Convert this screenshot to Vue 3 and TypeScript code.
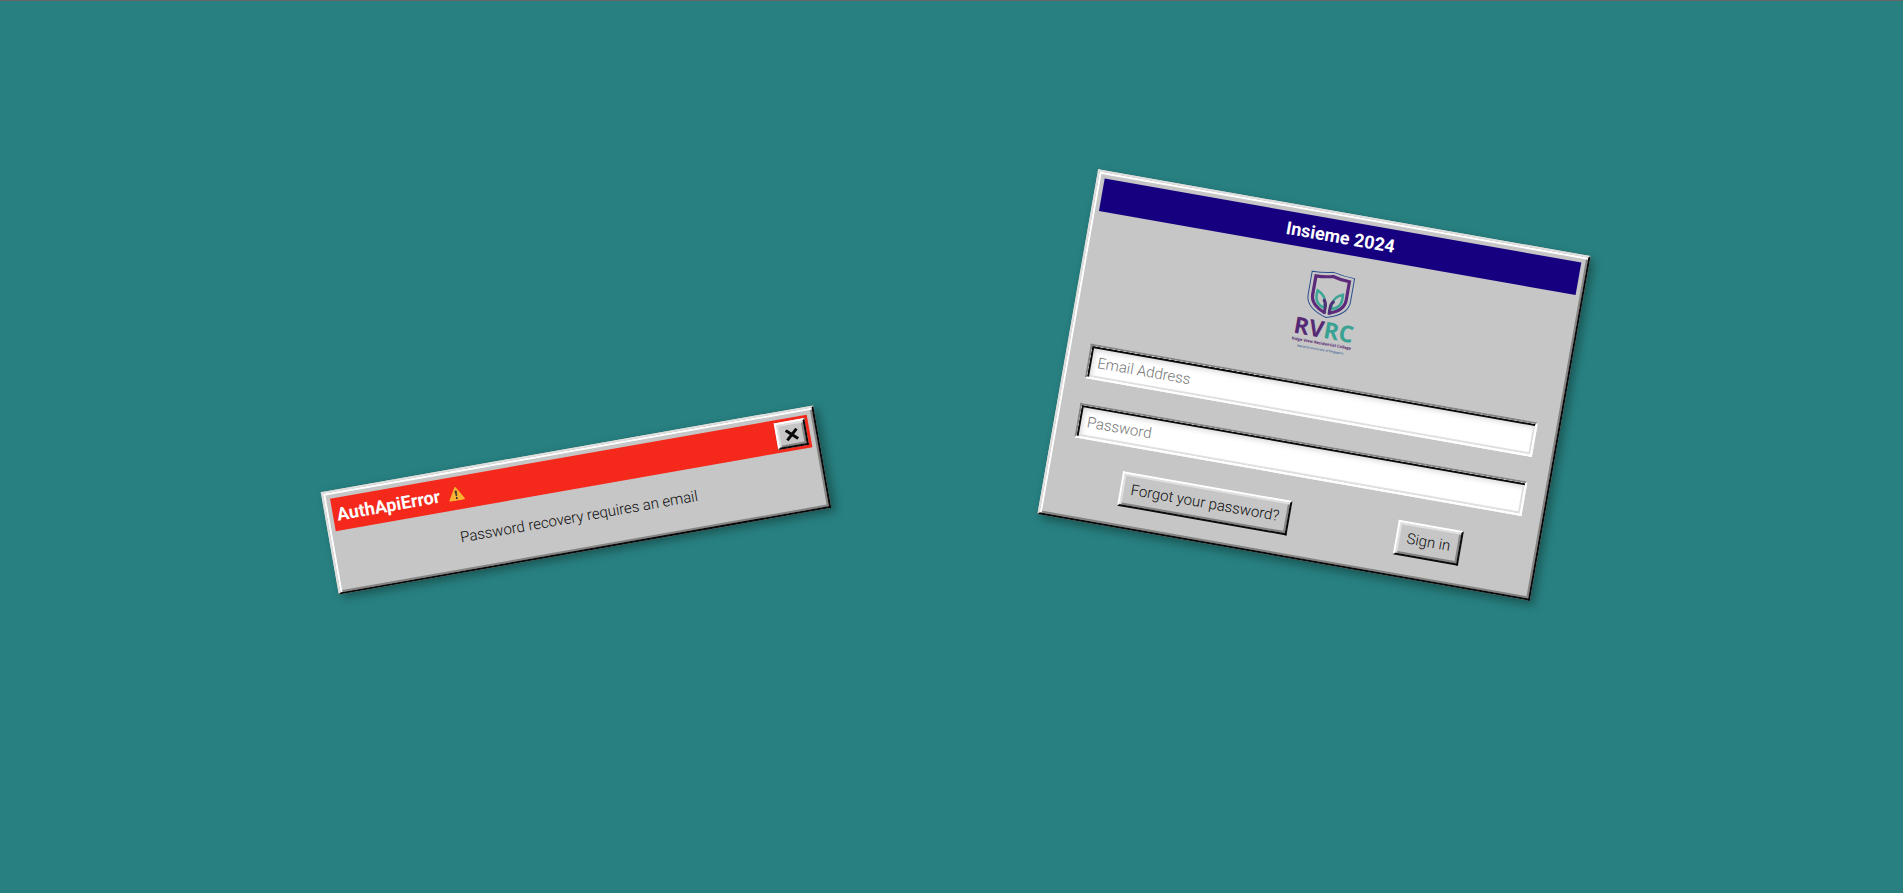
<script setup lang="ts">
import { ref } from 'vue'

const email = ref('')
const password = ref('')
const error = ref<{ name: string; message: string } | null>({
  name: 'AuthApiError',
  message: 'Password recovery requires an email',
})

function recover(): void {
  if (!email.value) {
    error.value = { name: 'AuthApiError', message: 'Password recovery requires an email' }
  }
}
</script>

<template>
  <main class="desktop">
    <section v-if="error" class="window window-error" role="alert">
      <header class="bar bar-error">
        <h2 class="title">{{ error.name }}</h2>
        <svg class="warning" viewBox="0 0 16 14" aria-hidden="true">
          <path d="M7.3.5a.8.8 0 0 1 1.400 0l7.100 12.300a.8.8 0 0 1-.7 1.200H.9a.8.8 0 0 1-.7-1.200z" fill="#f9b233" />
          <path d="M7.200 4.200h1.600l-.4 5H7.600z" fill="#2b2b2b" stroke="#2b2b2b" stroke-width=".4" />
          <circle cx="8" cy="11.400" r="1" fill="#2b2b2b" />
        </svg>
        <button class="button close" type="button" aria-label="Close" @click="error = null">
          <svg viewBox="0 0 14 12" width="14" height="12" aria-hidden="true">
            <path d="M1.5 1l11 10M12.5 1l-11 10" stroke="#0a0a0a" stroke-width="3" />
          </svg>
        </button>
      </header>
      <p class="message">{{ error.message }}</p>
    </section>

    <section class="window window-login">
      <header class="bar bar-login">
        <h1 class="title">Insieme 2024</h1>
      </header>
      <form class="form" @submit.prevent>
        <svg class="logo" viewBox="0 0 60 84" role="img" aria-label="RVRC">
          <path d="M8.500 3.200Q20 3 30 .6Q40 3 51.500 3.200V27C51.500 37 42 43 30 46.500C18 43 8.500 37 8.500 27Z" fill="none" stroke="#2c4f8f" stroke-width="1" />
          <path d="M28.400 42C18 38.500 13 34 13 26V7.200Q22 7 30 4.800Q38 7 47 7.200V26C47 34 42 38.500 31.600 42" fill="none" stroke="#5d2a7b" stroke-width="3.200" />
          <path d="M26 37C19 35.500 16 30 17.200 21.200C23 23.500 26 27 26.500 33Z" fill="none" stroke="#3fa596" stroke-width="2.600" />
          <path d="M34 37C41 35.500 44 30 42.800 21.200C37 23.500 34 27 33.500 33Z" fill="none" stroke="#3fa596" stroke-width="2.600" />
          <path d="M27.600 43V36Q27.600 31.500 24.500 29M32.400 43V36Q32.400 31.500 35.500 29" fill="none" stroke="#4f2f78" stroke-width="3" />
          <path d="M30 31V44" stroke="#c6c6c6" stroke-width="1" />
          <text class="logo-name" x="30" y="67" text-anchor="middle"><tspan fill="#562975">RV</tspan><tspan fill="#39a292">RC</tspan></text>
          <text class="logo-line" x="30" y="74" text-anchor="middle" fill="#562975">Ridge View Residential College</text>
          <text class="logo-small" x="30" y="80" text-anchor="middle" fill="#2c5790">National University of Singapore</text>
        </svg>
        <input v-model="email" class="field" type="email" placeholder="Email Address" aria-label="Email Address" />
        <input v-model="password" class="field" type="password" placeholder="Password" aria-label="Password" />
        <div class="actions">
          <button class="button" type="button" @click="recover">Forgot your password?</button>
          <button class="button" type="submit">Sign in</button>
        </div>
      </form>
    </section>
  </main>
</template>

<style>
body {
  margin: 0;
}
</style>

<style scoped>
.desktop {
  position: relative;
  box-sizing: border-box;
  min-height: 100vh;
  overflow: hidden;
  border-top: 1px solid #666;
  background: #288080;
  color: #0a0a0a;
  font: 300 15px/23px Roboto, "Liberation Sans", sans-serif;
}

.window {
  position: absolute;
  box-sizing: border-box;
  width: 500px;
  padding: 6px;
  border: 2px solid;
  border-color: #dfdfdf #0a0a0a #0a0a0a #dfdfdf;
  background: #c6c6c6;
  box-shadow: 4px 4px 10px rgba(0, 0, 0, 0.35), inset 2px 2px 0 #fff, inset -2px -2px 0 #848584;
}

.window-error {
  top: calc(50% + 1px);
  left: calc(50% - 626px);
  transform: rotate(-10deg);
}

.window-login {
  top: calc(50% - 237px);
  left: calc(50% + 112px);
  transform: rotate(10deg);
}

.bar {
  display: flex;
  align-items: center;
  box-sizing: border-box;
  height: 33px;
  padding: 3px 3px 3px 4px;
  color: #fefefe;
}

.bar-error {
  gap: 8px;
  background: #f5281c;
}

.bar-login {
  justify-content: center;
  background: #170080;
}

.title {
  margin: 0;
  font-size: 18px;
  font-weight: 700;
}

.warning {
  width: 16px;
  height: 14px;
}

.message {
  margin: 0;
  padding: 17px 16px 15px;
  text-align: center;
}

.button {
  display: inline-flex;
  align-items: center;
  justify-content: center;
  box-sizing: border-box;
  height: 35px;
  padding: 0 9px;
  border: 2px solid;
  border-color: #fff #0a0a0a #0a0a0a #fff;
  background: #c6c6c6;
  box-shadow: inset 2px 2px 0 #dfdfdf, inset -2px -2px 0 #848584;
  color: #0a0a0a;
  font: inherit;
}

.close {
  width: 31px;
  height: 27px;
  margin-left: auto;
  padding: 0;
}

.form {
  display: flex;
  flex-direction: column;
  padding: 16px 15px 14px;
}

.logo {
  align-self: center;
  width: 60px;
  height: 84px;
  margin: 3px 0 29px;
}

.logo-name {
  font: 700 23px "Open Sans", sans-serif;
}

.logo-line {
  font: 700 4px "Open Sans", sans-serif;
}

.logo-small {
  font: 600 3px "Open Sans", sans-serif;
}

.field {
  box-sizing: border-box;
  width: 100%;
  height: 35px;
  margin-bottom: 25px;
  padding: 0 8px;
  border: 2px solid;
  border-color: #848584 #fefefe #fefefe #848584;
  border-radius: 0;
  outline: none;
  background: #fff;
  box-shadow: inset 2px 2px 0 #0a0a0a, inset -2px -2px 0 #dfdfdf, inset 3px 3px 6px rgba(0, 0, 0, 0.2);
  color: #0a0a0a;
  font: inherit;
}

.field::placeholder {
  color: #757575;
  opacity: 1;
}

.actions {
  display: flex;
  justify-content: space-around;
}
</style>
